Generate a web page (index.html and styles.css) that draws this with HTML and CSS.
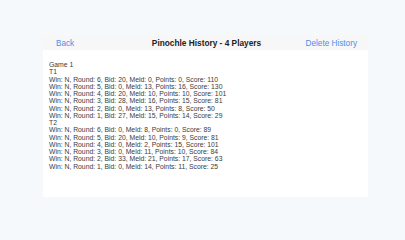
FILE: index.html
```html
<!DOCTYPE html>
<html>
<head>
<meta charset="utf-8">
<link rel="stylesheet" href="styles.css">
</head>
<body>
<div class="page">
  <div class="card">
    <div class="navbar">
      <span class="nav-btn nav-left">Back</span>
      <span class="nav-title">Pinochle History - 4 Players</span>
      <span class="nav-btn nav-right">Delete History</span>
    </div>
    <div class="content">
      <div class="line">Game 1</div>
      <div class="line">T1</div>
      <div class="line">Win: N, Round: 6, Bid: 20, Meld: 0, Points: 0, Score: 110</div>
      <div class="line">Win: N, Round: 5, Bid: 0, Meld: 13, Points: 16, Score: 130</div>
      <div class="line">Win: N, Round: 4, Bid: 20, Meld: 10, Points: 10, Score: 101</div>
      <div class="line">Win: N, Round: 3, Bid: 28, Meld: 16, Points: 15, Score: 81</div>
      <div class="line">Win: N, Round: 2, Bid: 0, Meld: 13, Points: 8, Score: 50</div>
      <div class="line">Win: N, Round: 1, Bid: 27, Meld: 15, Points: 14, Score: 29</div>
      <div class="line">T2</div>
      <div class="line">Win: N, Round: 6, Bid: 0, Meld: 8, Points: 0, Score: 89</div>
      <div class="line">Win: N, Round: 5, Bid: 20, Meld: 10, Points: 9, Score: 81</div>
      <div class="line">Win: N, Round: 4, Bid: 0, Meld: 2, Points: 15, Score: 101</div>
      <div class="line">Win: N, Round: 3, Bid: 0, Meld: 11, Points: 10, Score: 84</div>
      <div class="line">Win: N, Round: 2, Bid: 33, Meld: 21, Points: 17, Score: 63</div>
      <div class="line">Win: N, Round: 1, Bid: 0, Meld: 14, Points: 11, Score: 25</div>
    </div>
  </div>
</div>
</body>
</html>
```
FILE: styles.css
```css
html, body {
  margin: 0;
  padding: 0;
  background: #f6f9fc;
  font-family: "Liberation Sans", Arial, sans-serif;
}
.page {
  width: 405px;
  height: 228px;
  padding: 36px 37px 0 43px;
  box-sizing: border-box;
}
.card {
  width: 325px;
  height: 161px;
  background: #ffffff;
  display: flex;
  flex-direction: column;
}
.navbar {
  height: 14px;
  background: #f7f7f7;
  display: grid;
  grid-template-columns: 1fr auto 1fr;
  align-items: center;
  padding: 0 11px 0 13px;
  font-size: 8.2px;
}
.nav-btn {
  color: #4a8ef0;
}
.nav-left {
  justify-self: start;
}
.nav-right {
  justify-self: end;
}
.nav-title {
  font-weight: bold;
  color: #222222;
  font-size: 8.3px;
}
.content {
  padding: 11px 6px 0 6px;
  font-size: 6.8px;
  line-height: 7.25px;
  color: #3a3a3a;
}
```
